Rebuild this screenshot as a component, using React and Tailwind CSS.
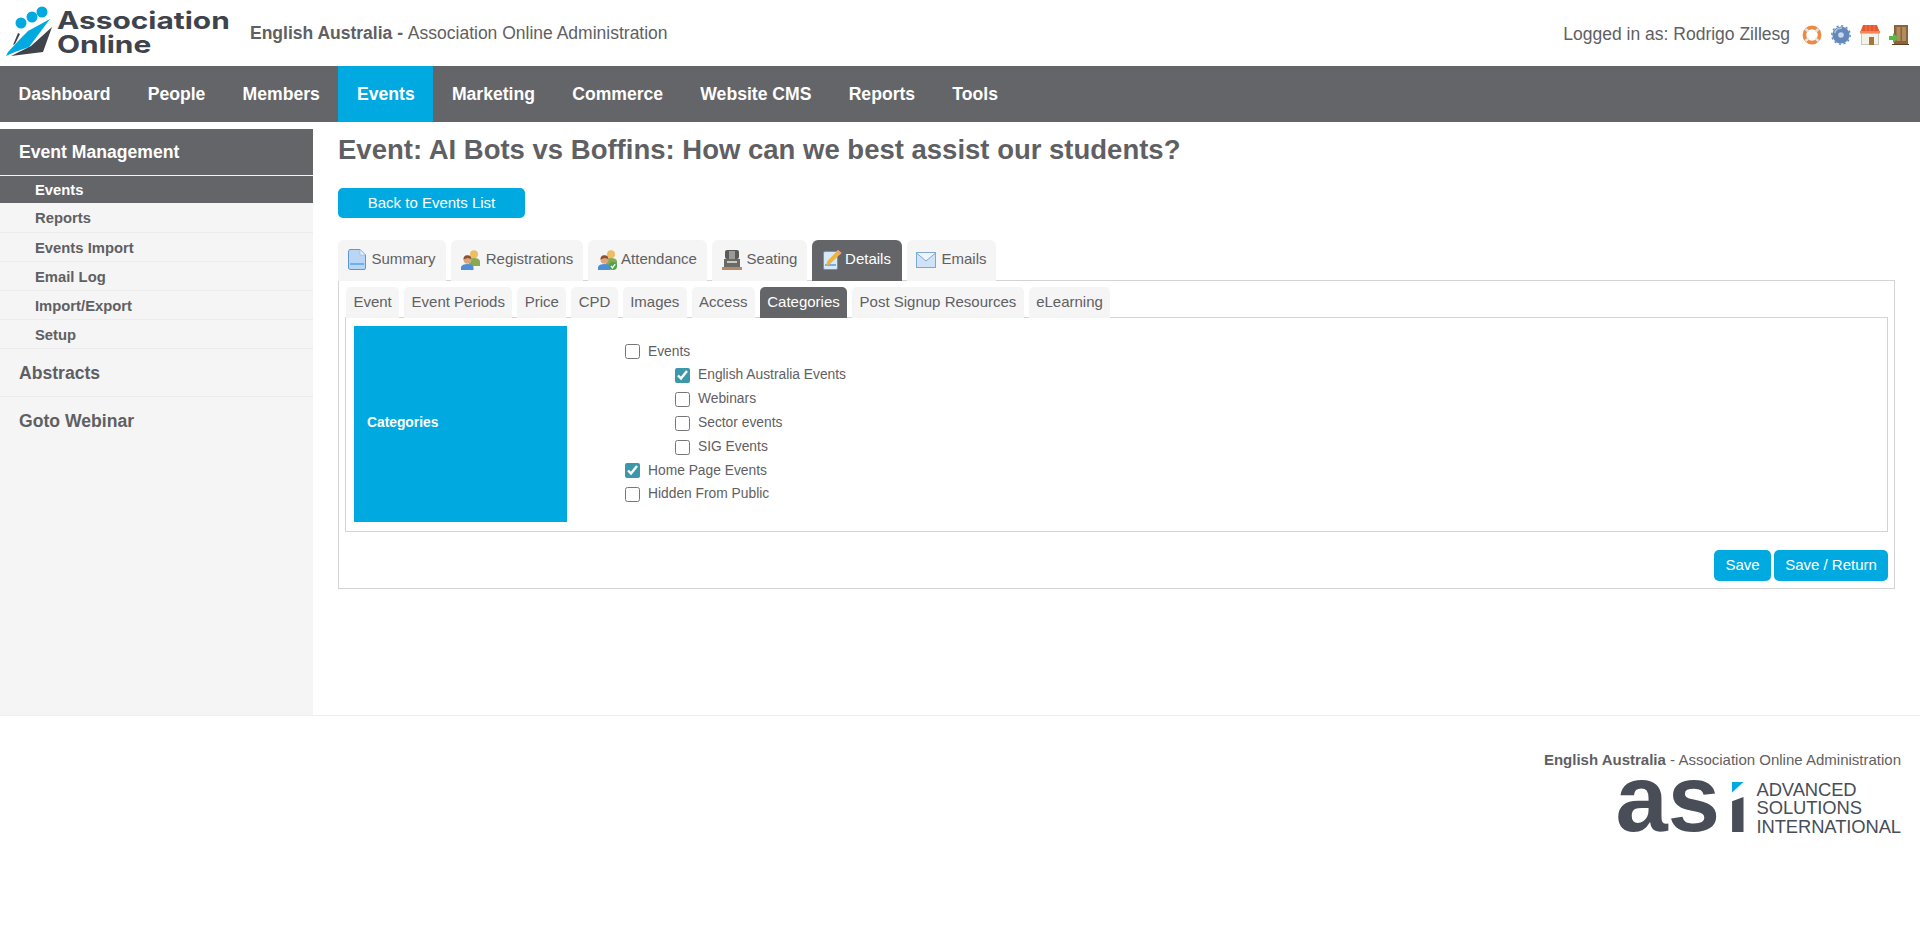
import React from "react";

const navItems = ["Dashboard", "People", "Members", "Events", "Marketing", "Commerce", "Website CMS", "Reports", "Tools"];
const sideLinks = ["Events", "Reports", "Events Import", "Email Log", "Import/Export", "Setup"];
const subTabs = ["Event", "Event Periods", "Price", "CPD", "Images", "Access", "Categories", "Post Signup Resources", "eLearning"];

const LogoMark = () => (
  <svg width="56" height="60" viewBox="0 0 56 60" className="shrink-0">
    <circle cx="20" cy="23" r="5.5" fill="#00a9e0" />
    <circle cx="31" cy="17" r="5.5" fill="#00a9e0" />
    <circle cx="41" cy="12" r="5.5" fill="#00a9e0" />
    <path d="M49 19 L27 31 L22 36 L7 52 L5 56 L14 52 L28 47 Z" fill="#00a9e0" />
    <path d="M51 27 L42 52 L10 56 L30 46 Z" fill="#3f434c" />
    <path d="M17 33 L12 45 L14 44 L19 34 Z" fill="#3f434c" />
  </svg>
);

const LifeRing = () => (
  <svg width="20" height="20" viewBox="0 0 20 20">
    <circle cx="10" cy="10" r="7.6" fill="none" stroke="#ee8a3f" strokeWidth="3.6" />
    <path d="M3.4 3.8 L6.6 6.8 M16.6 3.8 L13.4 6.8 M3.4 16.2 L6.6 13.2 M16.6 16.2 L13.4 13.2" stroke="#dfe3e8" strokeWidth="2.6" />
  </svg>
);

const Gear = () => (
  <svg width="20" height="20" viewBox="0 0 20 20">
    <circle cx="10" cy="10" r="8.6" fill="#6488ba" />
    <circle cx="10" cy="10" r="9.2" fill="none" stroke="#6488ba" strokeWidth="1.4" strokeDasharray="2.2 2.6" />
    <circle cx="10" cy="10" r="2.8" fill="#c9d8ea" />
    <path d="M3.6 8 A7 7 0 0 1 11 3.2" stroke="#a9c0dc" strokeWidth="1.6" fill="none" />
  </svg>
);

const House = () => (
  <svg width="20" height="20" viewBox="0 0 20 20">
    <rect x="1.5" y="8" width="17" height="11.5" fill="#f4f3ea" stroke="#c9c9c0" />
    <path d="M3 0 H17 L20 8 H0 Z" fill="#e9582c" />
    <path d="M0 6 H20 V8.5 H0 Z" fill="#f08a5d" />
    <path d="M6 0 V6 M10 0 V6 M14 0 V6" stroke="#f08a5d" strokeWidth=".7" />
    <rect x="9" y="12" width="5" height="8" fill="#a8743e" />
  </svg>
);

const Door = () => (
  <svg width="20" height="20" viewBox="0 0 20 20">
    <rect x="5" y="0" width="14" height="19" fill="#8c6239" />
    <rect x="7.5" y="2" width="4" height="14" fill="#b08d60" />
    <rect x="13" y="2" width="4" height="14" fill="#b08d60" />
    <rect x="3" y="19" width="17" height="1" fill="#5d4125" />
    <path d="M0 11 H4 V8 L9.5 13 L4 18 V15 H0 Z" fill="#58b947" />
  </svg>
);

const DocIcon = () => (
  <svg width="18" height="21" viewBox="0 0 18 21">
    <path d="M1.5 1 Q1 .5 2 .5 H12 L17.5 6 V19 Q17.5 20.5 16 20.5 H3 Q.5 20.5 .5 19 V2 Z" fill="#b9d6f4" stroke="#5f95d1" />
    <path d="M12 .5 V6 H17.5 Z" fill="#e6f1fb" stroke="#8fb6e0" strokeWidth=".6" />
    <rect x="2" y="14" width="14" height="2" fill="#6fb0ea" />
  </svg>
);

const PeopleIcon = ({ check }) => (
  <svg width="20" height="20" viewBox="0 0 20 20">
    <circle cx="13" cy="4.2" r="4" fill="#eebd62" />
    <path d="M8 16 V10 Q9 8 13 8 Q18 8 19 11 V16 Z" fill="#8aa84f" />
    <circle cx="6.5" cy="9.8" r="4" fill="#dba67c" />
    <path d="M2.5 9.5 A4 4 0 0 1 10.5 9 L6.5 8 Z" fill="#8a5230" />
    <path d="M0 20 V17 Q1 14 6.5 14 Q12 14 12.5 17 V20 Z" fill="#4f8ed6" />
    {check && <circle cx="15" cy="16" r="4" fill="#4aa54a" />}
    {check && <path d="M13 16 L14.5 17.8 L17.2 14.2" stroke="#fff" strokeWidth="1.4" fill="none" />}
  </svg>
);

const SeatIcon = () => (
  <svg width="20" height="20" viewBox="0 0 20 20">
    <rect x="3" y="0" width="14" height="9" rx="2" fill="#5a5a58" />
    <rect x="7" y="1" width="6" height="8" fill="#9a9a96" />
    <rect x="2" y="9" width="16" height="8" fill="#6a6a66" />
    <rect x="5" y="11" width="10" height="2" fill="#c8c8c2" />
    <rect x="0" y="17" width="20" height="3" fill="#b58a68" />
  </svg>
);

const EditIcon = () => (
  <svg width="19" height="21" viewBox="0 0 19 21">
    <rect x=".5" y="2.5" width="14" height="18" rx="1.5" fill="#d7e8f9" stroke="#5f95d1" />
    <rect x="2" y="15" width="11" height="2" fill="#6fb0ea" />
    <path d="M15 1 L18.5 4 L7 15 L3 17 L4.5 12 Z" fill="#f0b43c" />
    <path d="M15 1 L18.5 4 L17 5.5 L13.5 2.5 Z" fill="#e9a09a" />
  </svg>
);

const MailIcon = () => (
  <svg width="20" height="16" viewBox="0 0 20 16">
    <rect x=".5" y=".5" width="19" height="15" fill="#cfe2f6" stroke="#7ba8d8" />
    <path d="M.5 1 L10 9 L19.5 1" fill="#eef5fc" stroke="#7ba8d8" />
  </svg>
);

const tabs = [
  { label: "Summary", icon: <DocIcon />, cls: "w-[108px] gap-[5px]" },
  { label: "Registrations", icon: <PeopleIcon />, cls: "w-[132px] gap-[5px]" },
  { label: "Attendance", icon: <PeopleIcon check />, cls: "w-[119px] gap-[3px]" },
  { label: "Seating", icon: <SeatIcon />, cls: "w-[95px] gap-[5px]" },
  { label: "Details", icon: <EditIcon />, cls: "w-[90px] gap-[3px]", active: true },
  { label: "Emails", icon: <MailIcon />, cls: "w-[89px] gap-[5px]" },
];

const sideRowClass = (i) => {
  if (i === 0) return "h-[27px] bg-[#646569] text-white";
  if (i === 1) return "h-[30px] border-b border-[#ececec]";
  return "h-[29px] border-b border-[#ececec]";
};

const CheckRow = ({ label, sub, checked }) => (
  <label className={`flex items-center h-[23.8px] gap-[8px] ${sub ? "pl-[50px]" : ""}`}>
    <input type="checkbox" defaultChecked={checked} className="w-[15px] h-[15px] accent-[#3d97ab]" />
    <span>{label}</span>
  </label>
);

export default function App() {
  return (
    <div className="min-h-[928px] bg-white text-[#5f6063] font-['Liberation_Sans',Arial,sans-serif]">
      {/* top bar */}
      <header className="h-[66px] flex items-center justify-between pr-[11px]">
        <div className="flex items-center">
          <div className="flex items-start w-[250px] h-[66px] pl-px">
            <LogoMark />
            <div className="pt-[9px] text-[#3f434c] font-['Inter',sans-serif] font-bold text-[24px] leading-[24px] origin-left scale-x-[1.245]">
              <div>Association</div>
              <div>Online</div>
            </div>
          </div>
          <div className="text-[17.5px]">
            <b className="font-bold">English Australia - </b>Association Online Administration
          </div>
        </div>
        <div className="flex items-center mt-[3px]">
          <span className="text-[17.5px] mr-[12px]">Logged in as: Rodrigo Zillesg</span>
          <div className="flex items-center gap-[9px]">
            <LifeRing />
            <Gear />
            <House />
            <Door />
          </div>
        </div>
      </header>

      {/* main nav */}
      <nav className="h-[56px] flex bg-[#646569]">
        {navItems.map((item) => (
          <a
            key={item}
            className={`px-[18.6px] flex items-center text-white font-bold text-[17.6px] ${item === "Events" ? "bg-[#00a9e0]" : ""}`}
          >
            {item}
          </a>
        ))}
      </nav>

      <div className="flex h-[593px]">
        {/* side menu */}
        <aside className="w-[313px] shrink-0 pt-[7px]">
          <div className="h-full bg-[#f5f5f5]">
            <div className="h-[46px] flex items-center pl-[19px] bg-[#646569] text-white font-bold text-[17.6px]">Event Management</div>
            <ul className="mt-px font-bold text-[14.8px]">
              {sideLinks.map((link, i) => (
                <li key={link} className={`flex items-center pl-[35px] pt-[2px] ${sideRowClass(i)}`}>
                  {link}
                </li>
              ))}
            </ul>
            <div className="h-[48px] flex items-center pl-[19px] pt-[2px] border-b border-[#ececec] font-bold text-[17.6px]">Abstracts</div>
            <div className="h-[48px] flex items-center pl-[19px] font-bold text-[17.6px]">Goto Webinar</div>
          </div>
        </aside>

        {/* content */}
        <main className="flex-1 px-[25px]">
          <h1 className="mt-[11px] text-[27.5px] leading-[34px] font-bold">Event: AI Bots vs Boffins: How can we best assist our students?</h1>
          <button className="mt-[21px] block w-[187px] h-[30px] rounded-[5px] bg-[#00a9e0] text-white text-[15px]">Back to Events List</button>

          <div className="mt-[22px] flex gap-[5px] h-[41px] text-[15px]">
            {tabs.map((t) => (
              <div
                key={t.label}
                className={`flex items-center justify-center pb-[2px] rounded-t-[6px] ${t.cls} ${t.active ? "bg-[#646569] text-white" : "bg-[#f5f5f5]"}`}
              >
                {t.icon}
                <span>{t.label}</span>
              </div>
            ))}
          </div>

          <section className="-mt-px border border-[#d4d4d4] px-[6px] pt-[6px] h-[309px]">
            <div className="flex gap-[5px] h-[31px] pl-px text-[15px]">
              {subTabs.map((t) => (
                <div
                  key={t}
                  className={`flex items-center px-[7.4px] rounded-t-[5px] ${t === "Categories" ? "bg-[#646569] text-white" : "bg-[#f5f5f5]"}`}
                >
                  {t}
                </div>
              ))}
            </div>
            <div className="-mt-px border border-[#d4d4d4] h-[215px] p-[8px] flex gap-[58px] text-[13.8px]">
              <div className="w-[213px] h-[196px] bg-[#00a9e0] flex items-center pl-[13px] pb-[2px] text-white font-bold">Categories</div>
              <div className="pt-[14px]">
                <CheckRow label="Events" />
                <CheckRow label="English Australia Events" sub checked />
                <CheckRow label="Webinars" sub />
                <CheckRow label="Sector events" sub />
                <CheckRow label="SIG Events" sub />
                <CheckRow label="Home Page Events" checked />
                <CheckRow label="Hidden From Public" />
              </div>
            </div>
            <div className="mt-[18px] flex justify-end gap-[3px] text-[15px] text-white">
              <button className="w-[57px] h-[31px] rounded-[5px] bg-[#00a9e0]">Save</button>
              <button className="w-[114px] h-[31px] rounded-[5px] bg-[#00a9e0]">Save / Return</button>
            </div>
          </section>
        </main>
      </div>

      {/* footer */}
      <footer className="border-t border-[#eeeeee] pt-[35px] pr-[19px] flex flex-col items-end">
        <div className="text-[15px] leading-[18px]">
          <b>English Australia</b> - Association Online Administration
        </div>
        <div className="mt-[13px] h-[52px] flex items-start text-[#484d57]">
          <div className="relative flex h-[52px] w-[128px] text-[94px] leading-[34px] font-bold">
            <span>as</span>
            <span className="w-[12px] h-[35px] mt-[15px] ml-[12px] bg-[#484d57] [clip-path:polygon(0_12%,100%_0,100%_100%,0_100%)]" />
            <span className="absolute right-0 top-0 w-[12px] h-[11px] bg-[#00a9e0] [clip-path:polygon(0_0,100%_0,0_100%)]" />
          </div>
          <div className="ml-[13px] -mt-[1px] text-[18.4px] leading-[18.4px] -tracking-[0.1px]">
            <div>ADVANCED</div>
            <div>SOLUTIONS</div>
            <div>INTERNATIONAL</div>
          </div>
        </div>
      </footer>
    </div>
  );
}
